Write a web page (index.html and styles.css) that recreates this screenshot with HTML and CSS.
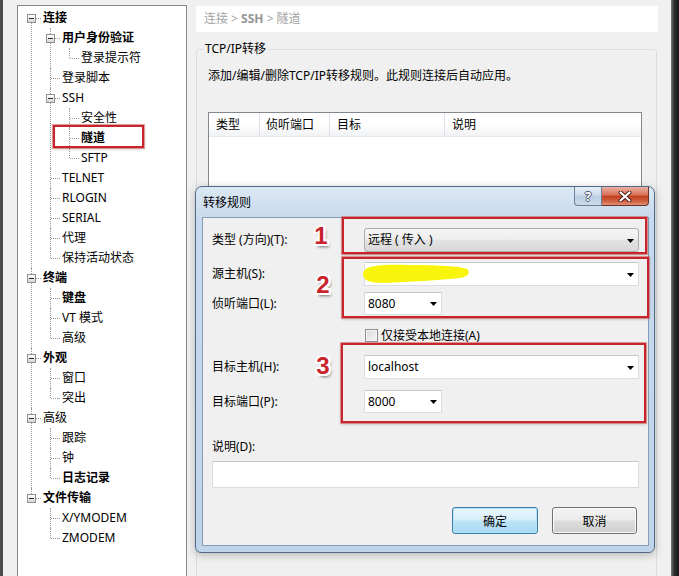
FILE: index.html
```html
<!DOCTYPE html>
<html lang="zh-CN">
<head>
<meta charset="utf-8">
<title>隧道</title>
<link rel="stylesheet" href="styles.css">
</head>
<body>
<div class="app">
  <div class="edge-left"></div>
  <nav class="tree-panel">
    <ul class="tree">
      <li><div class="row"><span class="exp"></span><b>连接</b></div>
        <ul>
          <li><div class="row"><span class="exp"></span><b>用户身份验证</b></div>
            <ul>
              <li><div class="row">登录提示符</div></li>
            </ul>
          </li>
          <li><div class="row">登录脚本</div></li>
          <li><div class="row"><span class="exp"></span>SSH</div>
            <ul>
              <li><div class="row">安全性</div></li>
              <li><div class="row"><b>隧道</b></div></li>
              <li><div class="row">SFTP</div></li>
            </ul>
          </li>
          <li><div class="row">TELNET</div></li>
          <li><div class="row">RLOGIN</div></li>
          <li><div class="row">SERIAL</div></li>
          <li><div class="row">代理</div></li>
          <li><div class="row">保持活动状态</div></li>
        </ul>
      </li>
      <li><div class="row"><span class="exp"></span><b>终端</b></div>
        <ul>
          <li><div class="row"><b>键盘</b></div></li>
          <li><div class="row">VT 模式</div></li>
          <li><div class="row">高级</div></li>
        </ul>
      </li>
      <li><div class="row"><span class="exp"></span><b>外观</b></div>
        <ul>
          <li><div class="row">窗口</div></li>
          <li><div class="row">突出</div></li>
        </ul>
      </li>
      <li><div class="row"><span class="exp"></span>高级</div>
        <ul>
          <li><div class="row">跟踪</div></li>
          <li><div class="row">钟</div></li>
          <li><div class="row"><b>日志记录</b></div></li>
        </ul>
      </li>
      <li><div class="row"><span class="exp"></span><b>文件传输</b></div>
        <ul>
          <li><div class="row">X/YMODEM</div></li>
          <li><div class="row">ZMODEM</div></li>
        </ul>
      </li>
    </ul>
    <div class="mark mark-tree"></div>
  </nav>

  <main class="main">
    <div class="crumb">连接 &gt; <b>SSH</b> &gt; 隧道</div>
    <fieldset class="group">
      <legend>TCP/IP转移</legend>
      <p class="desc">添加/编辑/删除TCP/IP转移规则。此规则连接后自动应用。</p>
      <div class="list">
        <div class="list-head">
          <span class="c1">类型</span>
          <span class="c2">侦听端口</span>
          <span class="c3">目标</span>
          <span class="c4">说明</span>
        </div>
      </div>
    </fieldset>
  </main>
  <div class="edge-right"></div>
</div>

<div class="dialog">
  <div class="titlebar">
    <span class="title">转移规则</span>
    <div class="caption">
      <span class="cbtn help">?</span>
      <span class="cbtn close">
        <svg width="14" height="11" viewBox="0 0 14 11"><path d="M2.5 1.5 L11.5 9.5 M11.5 1.5 L2.5 9.5" stroke="#4a1a12" stroke-width="4" stroke-linecap="round"/><path d="M2.5 1.5 L11.5 9.5 M11.5 1.5 L2.5 9.5" stroke="#ffffff" stroke-width="2.2" stroke-linecap="round"/></svg>
      </span>
    </div>
  </div>
  <div class="client">
    <div class="frow r1">
      <label>类型 (方向)(T):</label>
      <div class="combo drop"><span class="val">远程 ( 传入 )</span><svg class="arrow" width="7" height="4" viewBox="0 0 7 4"><path d="M0 0H7L3.5 4Z" fill="#000"/></svg></div>
    </div>
    <div class="frow r2">
      <label>源主机(S):</label>
      <div class="combo"><span class="val"></span><svg class="arrow" width="7" height="4" viewBox="0 0 7 4"><path d="M0 0H7L3.5 4Z" fill="#000"/></svg>
        <svg class="scribble" width="112" height="23" viewBox="0 0 112 23"><path d="M3 12 C3 4 18 2 48 3 C78 3 99 4 107 7 C111 10 108 15 100 16 C80 18 50 20 24 21 C9 21 3 18 3 12 Z" fill="#f8f40c"/></svg>
      </div>
    </div>
    <div class="frow r3">
      <label>侦听端口(L):</label>
      <div class="combo small"><span class="val">8080</span><svg class="arrow" width="7" height="4" viewBox="0 0 7 4"><path d="M0 0H7L3.5 4Z" fill="#000"/></svg></div>
    </div>
    <div class="chkrow">
      <span class="chk"></span><span>仅接受本地连接(A)</span>
    </div>
    <div class="frow r4">
      <label>目标主机(H):</label>
      <div class="combo"><span class="val">localhost</span><svg class="arrow" width="7" height="4" viewBox="0 0 7 4"><path d="M0 0H7L3.5 4Z" fill="#000"/></svg></div>
    </div>
    <div class="frow r5">
      <label>目标端口(P):</label>
      <div class="combo small"><span class="val">8000</span><svg class="arrow" width="7" height="4" viewBox="0 0 7 4"><path d="M0 0H7L3.5 4Z" fill="#000"/></svg></div>
    </div>
    <div class="note-label">说明(D):</div>
    <div class="textbox"></div>
    <div class="btns">
      <button class="btn ok">确定</button>
      <button class="btn cancel">取消</button>
    </div>
  </div>

  <div class="mark m1"></div>
  <div class="mark m2"></div>
  <div class="mark m3"></div>
  <span class="badge b1">1</span>
  <span class="badge b2">2</span>
  <span class="badge b3">3</span>
</div>
</body>
</html>
```

FILE: styles.css
```css
* { box-sizing: border-box; }
html, body { margin: 0; padding: 0; }
body {
  width: 679px;
  height: 576px;
  overflow: hidden;
  position: relative;
  background: #f0f0f0;
  font-family: "Noto Sans", "Noto Sans CJK SC", sans-serif;
  font-size: 12px;
  color: #000;
}

.app { display: flex; height: 576px; }
.edge-left { flex: none; width: 3px; background: #4b4b4b; }
.edge-right {
  flex: none;
  width: 8px;
  background: linear-gradient(to right, #7a7a7a, #2e2e2e 40%, #151515);
}

/* ---------- tree ---------- */
.tree-panel {
  flex: none;
  position: relative;
  width: 170px;
  height: 590px;
  margin: 5px 0 0 14px;
  padding-top: 2px;
  background: #fff;
  border: 1px solid #828790;
}
.tree, .tree ul { list-style: none; margin: 0; padding: 0; }
.tree ul { margin-left: 19px; }
.tree li { position: relative; }
.tree li::before {
  content: "";
  position: absolute;
  left: 13px;
  top: 0;
  bottom: 0;
  border-left: 1px dotted #9a9a9a;
}
.tree li:last-child::before { bottom: auto; height: 10px; }
.tree > li:first-child::before { top: 10px; bottom: 0; height: auto; }
.row {
  height: 20px;
  line-height: 20px;
  padding-left: 25px;
  white-space: nowrap;
}
.row::before {
  content: "";
  position: absolute;
  left: 14px;
  top: 10px;
  width: 9px;
  border-top: 1px dotted #9a9a9a;
}
.row b { font-weight: 700; }
.exp {
  position: absolute;
  z-index: 1;
  left: 9px;
  top: 6px;
  width: 9px;
  height: 9px;
  border: 1px solid #919191;
  background: linear-gradient(#ffffff, #d6d6d6);
}
.exp::after {
  content: "";
  position: absolute;
  left: 1px;
  top: 3px;
  width: 5px;
  height: 1px;
  background: #2b2b2b;
}

/* ---------- main ---------- */
.main { flex: 1; padding: 6px 13px 0 9px; }
.crumb {
  height: 26px;
  line-height: 26px;
  padding-left: 8px;
  background: #fff;
  color: #a3a3a3;
}
.crumb b { color: #949494; }
.group {
  margin: 9px 1px 0 0;
  padding: 11px 14px 0 11px;
  height: 560px;
  min-inline-size: 0;
  border: 1px solid #d5dfe5;
  border-radius: 3px;
}
.group legend {
  margin-left: -5px;
  padding: 0 2px;
  line-height: 16px;
}
.desc { margin: 0; line-height: 16px; }
.list {
  margin-top: 28px;
  height: 200px;
  background: #fff;
  border: 1px solid #828790;
}
.list-head {
  display: flex;
  height: 24px;
  background: linear-gradient(#ffffff, #ffffff 45%, #f1f2f4);
  border-bottom: 1px solid #e5e7ea;
}
.list-head span {
  line-height: 23px;
  padding-left: 7px;
  border-right: 1px solid #dfe2e7;
}
.list-head .c1 { width: 51px; }
.list-head .c2 { width: 70px; padding-left: 6px; }
.list-head .c3 { width: 115px; }
.list-head .c4 { flex: 1; border-right: none; }

/* ---------- dialog ---------- */
.dialog {
  position: absolute;
  left: 195px;
  top: 186px;
  width: 460px;
  height: 367px;
  display: flex;
  flex-direction: column;
  padding: 0 5px 6px 6px;
  border: 1px solid #4f6a87;
  border-radius: 7px 7px 6px 6px;
  background: linear-gradient(#dce8f4, #c8daed 30px, #bfd3e9);
  box-shadow: 0 2px 8px rgba(0, 0, 0, 0.25);
}
.titlebar {
  flex: none;
  height: 30px;
  display: flex;
  align-items: flex-start;
}
.title { padding-left: 1px; line-height: 31px; }
.caption { display: flex; margin: 0 0 0 auto; height: 19px; }
.cbtn {
  display: flex;
  align-items: center;
  justify-content: center;
  height: 19px;
}
.help {
  width: 28px;
  border: 1px solid #6c7f98;
  border-top: none;
  border-radius: 0 0 0 4px;
  background: linear-gradient(#e6eef7, #cfdcec 45%, #bacde3 50%, #cbdaeb);
  color: #fff;
  font-weight: 700;
  font-size: 13px;
  line-height: 17px;
  text-shadow: 1px 0 #4c5c70, -1px 0 #4c5c70, 0 1px #4c5c70, 0 -1px #4c5c70;
}
.close {
  width: 47px;
  border: 1px solid #6a3328;
  border-top: none;
  border-left: none;
  border-radius: 0 0 4px 0;
  background: linear-gradient(#eab0a2, #d86f56 45%, #c4401f 52%, #cf6443 80%, #e3937a);
}
.client {
  flex: 1;
  padding: 10px 9px 0 9px;
  background: #f0f0f0;
  border: 1px solid #879db5;
}
.frow {
  display: grid;
  grid-template-columns: 152px 1fr;
  align-items: center;
}
.frow label { line-height: 16px; }
.r1 { margin-top: 0; }
.r2 { margin-top: 10px; }
.r3 { margin-top: 6px; }
.r4 { margin-top: 13px; }
.r5 { margin-top: 11px; }

.combo {
  position: relative;
  display: flex;
  align-items: center;
  height: 24px;
  padding-left: 3px;
  background: #fff;
  border: 1px solid #dadde2;
  border-top-color: #c4c7cc;
}
.combo .val { flex: 1; line-height: 16px; white-space: nowrap; }
.combo .arrow { flex: none; margin-right: 4px; margin-top: 1px; }
.combo.small { width: 78px; height: 23px; }
.combo.drop {
  border: 1px solid #acacac;
  border-radius: 3px;
  background: linear-gradient(#f5f5f5, #ececec 50%, #e2e2e2 52%, #d9d9d9);
}
.scribble { position: absolute; left: -5px; top: -1px; }

.chkrow {
  display: flex;
  align-items: center;
  height: 13px;
  margin-top: 14px;
  padding-left: 153px;
  line-height: 16px;
}
.chk {
  flex: none;
  width: 13px;
  height: 13px;
  margin-right: 3px;
  border: 1px solid #8e8f8f;
  background: linear-gradient(135deg, #d9d9d9, #f8f8f8);
  box-shadow: inset 0 0 0 1px #f4f4f4;
}
.note-label { margin-top: 27px; line-height: 14px; }
.textbox {
  height: 27px;
  margin-top: 7px;
  background: #fff;
  border: 1px solid #dadde2;
  border-top-color: #c4c7cc;
}
.btns {
  display: flex;
  justify-content: flex-end;
  gap: 14px;
  margin-top: 19px;
  padding-right: 2px;
}
.btn {
  height: 27px;
  padding: 0;
  font: inherit;
  color: #000;
  border-radius: 3px;
}
.btn.ok {
  width: 86px;
  border: 1px solid #3b7fa9;
  background: linear-gradient(#e9f6fd, #d7eefb 48%, #bde4f7 52%, #a9d8f2);
  box-shadow: inset 0 0 0 1px #b5e2f8;
}
.btn.cancel {
  width: 85px;
  border: 1px solid #707070;
  background: linear-gradient(#f2f2f2, #ebebeb 48%, #dddddd 52%, #cfcfcf);
  box-shadow: inset 0 0 0 1px #fafafa;
}

/* ---------- annotations ---------- */
.mark {
  position: absolute;
  border: 2px solid #c8242b;
  box-shadow: 0 0 0 1px rgba(214, 86, 86, 0.55), 0 1px 3px rgba(0, 0, 0, 0.25);
}
.mark-tree { left: 35px; top: 119px; width: 91px; height: 23px; }
.m1 { left: 146px; top: 30px; width: 305px; height: 37px; }
.m2 { left: 146px; top: 70px; width: 307px; height: 61px; }
.m3 { left: 145px; top: 156px; width: 305px; height: 80px; }
.badge {
  position: absolute;
  width: 24px;
  height: 24px;
  text-align: center;
  font-family: "Liberation Sans", Arial, sans-serif;
  font-weight: 700;
  font-size: 24px;
  line-height: 24px;
  color: #c9232b;
  text-shadow:
    1px 0 #fff, -1px 0 #fff, 0 1px #fff, 0 -1px #fff,
    2px 0 #fff, -2px 0 #fff, 0 2px #fff, 0 -2px #fff,
    1px 1px #fff, -1px -1px #fff, 1px -1px #fff, -1px 1px #fff,
    2px 2px #fff, -2px 2px #fff, 2px -2px #fff,
    2px 3px 3px rgba(0, 0, 0, 0.55);
}
.b1 { left: 113px; top: 37px; }
.b2 { left: 115px; top: 86px; }
.b3 { left: 115px; top: 167px; }
```
